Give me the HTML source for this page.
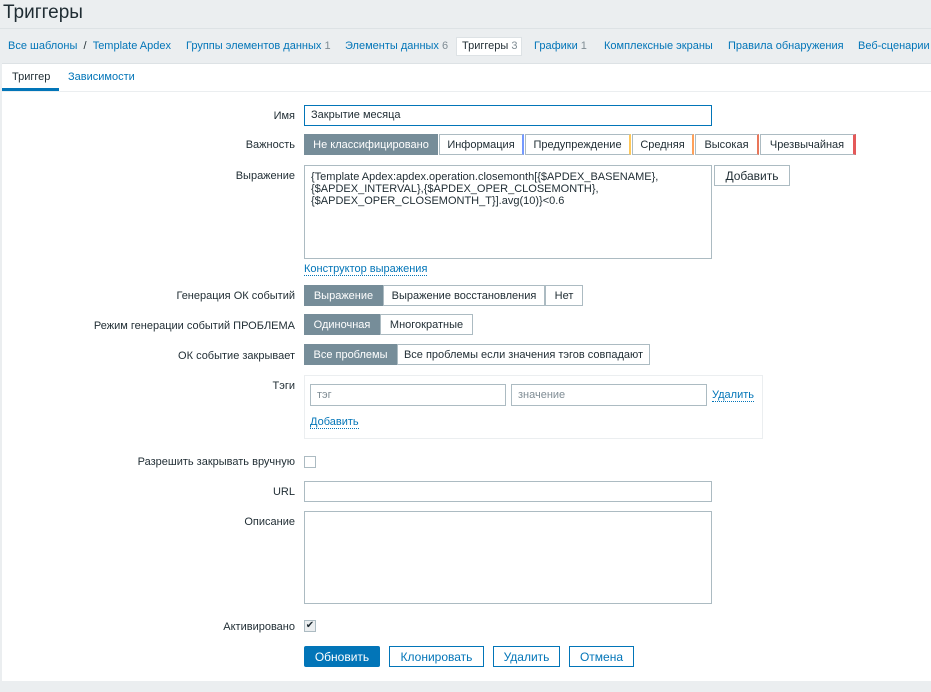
<!DOCTYPE html>
<html><head><meta charset="utf-8"><style>
*{box-sizing:border-box;margin:0;padding:0}
body{width:931px;height:692px;background:#ebeef0;font-family:"Liberation Sans",Arial,sans-serif;font-size:11px;color:#1f2c33;position:relative;overflow:hidden}
.a{position:absolute;white-space:nowrap}
.lnk{color:#0275b8}
.cnt{color:#7f8c94}
.lbl{position:absolute;right:636px;text-align:right;white-space:nowrap}
.in{position:absolute;border:1px solid #acbbc2;background:#fff;padding:0 6px;line-height:19px}
.btn{position:absolute;border:1px solid #acbbc2;background:#fff;text-align:center;line-height:20px;white-space:nowrap}
.sel{background:#768d99;border-color:#768d99;color:#fff}
.dl{color:#0275b8;border-bottom:1px dotted #0275b8;line-height:12px}
.bb{position:absolute;border:1px solid #0275b8;color:#0275b8;background:#fff;text-align:center;line-height:20px}
.cb{position:absolute;width:12px;height:12px;border:1px solid #acbbc2;background:#fff}
</style></head><body>
<div class="a" style="left:3px;top:2px;font-size:19px;color:#1f2c33">Триггеры</div>
<div class="a" style="left:0;top:28px;width:931px;height:1px;background:#dde2e5"></div>
<div class="a" style="top:40px;left:8px">
<span class="lnk">Все шаблоны</span> &nbsp;/&nbsp; <span class="lnk">Template Apdex</span></div>
<div class="a lnk" style="top:40px;left:186px">Группы элементов данных <span class="cnt">1</span></div>
<div class="a lnk" style="top:40px;left:345px">Элементы данных <span class="cnt">6</span></div>
<div class="a" style="top:37px;left:456px;width:66px;height:19px;background:#fff;border:1px solid #dde2e5"></div>
<div class="a" style="top:40px;left:462px">Триггеры <span class="cnt">3</span></div>
<div class="a lnk" style="top:40px;left:534px">Графики <span class="cnt">1</span></div>
<div class="a lnk" style="top:40px;left:604px">Комплексные экраны</div>
<div class="a lnk" style="top:40px;left:728px">Правила обнаружения</div>
<div class="a lnk" style="top:40px;left:858px">Веб-сценарии</div>
<div class="a" style="left:2px;top:63px;width:929px;height:618px;background:#fff;border-top:1px solid #dde2e5"></div>
<div class="a" style="left:12px;top:71px">Триггер</div>
<div class="a lnk" style="left:68px;top:71px">Зависимости</div>
<div class="a" style="left:2px;top:88px;width:57px;height:3px;background:#0275b8"></div>
<div class="a" style="left:2px;top:91px;width:929px;height:1px;background:#ebeef0"></div>

<div class="lbl" style="top:110px">Имя</div>
<div class="in" style="left:304px;top:105px;width:408px;height:21px;border-color:#0275b8">Закрытие месяца</div>

<div class="lbl" style="top:139px">Важность</div>
<div class="btn sel" style="left:304px;top:134px;width:134px;height:21px">Не классифицировано</div>
<div class="btn" style="left:439px;top:134px;width:85px;height:21px;border-right:2px solid #7499ff">Информация</div>
<div class="btn" style="left:525px;top:134px;width:106px;height:21px;border-right:2px solid #ffc859">Предупреждение</div>
<div class="btn" style="left:632px;top:134px;width:62px;height:21px;border-right:2px solid #ffa059">Средняя</div>
<div class="btn" style="left:695px;top:134px;width:64px;height:21px;border-right:2px solid #e97659">Высокая</div>
<div class="btn" style="left:760px;top:134px;width:96px;height:21px;border-right:3px solid #e45959">Чрезвычайная</div>

<div class="lbl" style="top:170px">Выражение</div>
<div class="in" style="left:304px;top:165px;width:408px;height:94px;line-height:12px;padding-top:5px">{Template Apdex:apdex.operation.closemonth[{$APDEX_BASENAME},<br>{$APDEX_INTERVAL},{$APDEX_OPER_CLOSEMONTH},<br>{$APDEX_OPER_CLOSEMONTH_T}].avg(10)}&lt;0.6</div>
<div class="btn" style="left:714px;top:165px;width:76px;height:21px;font-size:12px">Добавить</div>
<div class="a" style="left:304px;top:263px"><span class="dl">Конструктор выражения</span></div>

<div class="lbl" style="top:290px">Генерация ОК событий</div>
<div class="btn sel" style="left:304px;top:285px;width:79px;height:21px">Выражение</div>
<div class="btn" style="left:383px;top:285px;width:162px;height:21px">Выражение восстановления</div>
<div class="btn" style="left:545px;top:285px;width:38px;height:21px">Нет</div>

<div class="lbl" style="top:320px">Режим генерации событий ПРОБЛЕМА</div>
<div class="btn sel" style="left:304px;top:314px;width:76px;height:21px">Одиночная</div>
<div class="btn" style="left:380px;top:314px;width:93px;height:21px">Многократные</div>

<div class="lbl" style="top:350px">ОК событие закрывает</div>
<div class="btn sel" style="left:304px;top:344px;width:93px;height:21px">Все проблемы</div>
<div class="btn" style="left:397px;top:344px;width:253px;height:21px">Все проблемы если значения тэгов совпадают</div>

<div class="lbl" style="top:380px">Тэги</div>
<div class="a" style="left:304px;top:375px;width:459px;height:64px;border:1px solid #ebeef0"></div>
<div class="in" style="left:310px;top:384px;width:196px;height:22px;color:#7f8c94;line-height:21px">тэг</div>
<div class="in" style="left:511px;top:384px;width:196px;height:22px;color:#7f8c94;line-height:21px">значение</div>
<div class="a" style="left:712px;top:389px"><span class="dl">Удалить</span></div>
<div class="a" style="left:310px;top:416px"><span class="dl">Добавить</span></div>

<div class="lbl" style="top:456px">Разрешить закрывать вручную</div>
<div class="cb" style="left:304px;top:456px"></div>

<div class="lbl" style="top:486px">URL</div>
<div class="in" style="left:304px;top:481px;width:408px;height:21px"></div>

<div class="lbl" style="top:516px">Описание</div>
<div class="in" style="left:304px;top:511px;width:408px;height:93px"></div>

<div class="lbl" style="top:621px">Активировано</div>
<div class="cb" style="left:304px;top:620px;background:#ebeef0;font-size:10px;line-height:10px;text-align:center">✔</div>

<div class="a" style="left:304px;top:646px;width:76px;height:21px;background:#0275b8;color:#fff;text-align:center;line-height:22px;border-radius:2px;font-size:12px">Обновить</div>
<div class="bb" style="left:389px;top:646px;width:95px;height:21px;font-size:12px">Клонировать</div>
<div class="bb" style="left:493px;top:646px;width:67px;height:21px;font-size:12px">Удалить</div>
<div class="bb" style="left:569px;top:646px;width:65px;height:21px;font-size:12px">Отмена</div>
</body></html>
